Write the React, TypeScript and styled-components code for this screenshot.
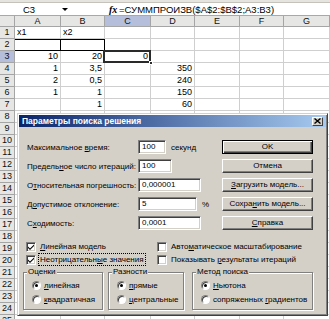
import React from "react";
import styled, { createGlobalStyle, css } from "styled-components";

const GlobalStyle = createGlobalStyle`
  html, body { margin: 0; padding: 0; background: #ffffff; }
  *, *::before, *::after { box-sizing: border-box; }
`;

const FONT = `"Liberation Sans", Arial, sans-serif`;

const Screen = styled.div`
  position: relative;
  width: 330px;
  height: 319px;
  overflow: hidden;
  background: #fff;
  font-family: ${FONT};
  font-size: 9px;
  color: #000;
`;

/* ---------- formula bar ---------- */
const Toolbar = styled.div`
  height: 3px;
  background: #e6e4de;
  border-bottom: 1px solid #c4c2bb;
`;

const FormulaBar = styled.div`
  display: flex;
  align-items: center;
  height: 13px;
  background: #fff;
  border-bottom: 1px solid #a9a8a2;
`;

const NameBox = styled.div`
  width: 58px;
  text-align: center;
  font-size: 9.5px;
`;

const DropArrow = styled.div`
  width: 14px;
  display: flex;
  justify-content: center;
  &::before {
    content: "";
    border-left: 3px solid transparent;
    border-right: 3px solid transparent;
    border-top: 3px solid #000;
  }
`;

const Spacer = styled.div<{ $w: number }>`
  width: ${(p) => p.$w}px;
`;

const Fx = styled.span`
  font-family: "Liberation Serif", "Times New Roman", serif;
  font-style: italic;
  font-weight: bold;
  font-size: 10px;
  width: 9px;
`;

const Formula = styled.span`
  margin-left: 1px;
  font-size: 9.5px;
  white-space: nowrap;
`;

/* ---------- sheet ---------- */
const Sheet = styled.div`
  display: grid;
  grid-template-columns: 15px 46px 44px 46px 44px 45px 44px 46px;
  grid-template-rows: 11px;
  grid-auto-rows: 12px;
`;

const headBase = css`
  background: #e6e6e4;
  border-right: 1px solid #a5a5a5;
  border-bottom: 1px solid #a5a5a5;
  text-align: center;
  line-height: 10px;
  font-size: 9px;
  color: #111;
`;

const Corner = styled.div`
  ${headBase}
`;

const ColHead = styled.div<{ $active?: boolean }>`
  ${headBase}
  background: ${(p) => (p.$active ? "#b5bfdc" : "#e6e6e4")};
`;

const RowHead = styled.div<{ $active?: boolean }>`
  ${headBase}
  line-height: 11px;
  background: ${(p) => (p.$active ? "#b5bfdc" : "#e6e6e4")};
`;

const Cell = styled.div<{ $align: "left" | "right"; $boxed?: boolean; $selected?: boolean }>`
  position: relative;
  border-right: 1px solid ${(p) => (p.$boxed ? "#000" : "#cfcfcf")};
  border-bottom: 1px solid ${(p) => (p.$boxed ? "#000" : "#cfcfcf")};
  ${(p) => p.$boxed && "box-shadow: inset 0 1px 0 #000;"}
  padding: 0 2px;
  line-height: 11px;
  font-size: 9px;
  text-align: ${(p) => p.$align};
  white-space: nowrap;
  ${(p) =>
    p.$selected &&
    css`
      &::after {
        content: "";
        position: absolute;
        inset: -1px -1px -1px -2px;
        border: 2px solid #2a2a2a;
      }
      &::before {
        content: "";
        position: absolute;
        right: -3px;
        bottom: -3px;
        width: 4px;
        height: 4px;
        background: #2a2a2a;
        border: 1px solid #fff;
        z-index: 1;
      }
    `}
`;

/* ---------- dialog ---------- */
const Dialog = styled.div`
  position: absolute;
  left: 17px;
  top: 113px;
  width: 311px;
  height: 203px;
  background: #d4d0c8;
  border: 1px solid;
  border-color: #d4d0c8 #404040 #404040 #d4d0c8;
  box-shadow: inset 1px 1px 0 #ffffff, inset -1px -1px 0 #808080;
  padding: 1px;
  display: flex;
  flex-direction: column;
  font-size: 8px;
`;

const TitleBar = styled.div`
  height: 12px;
  display: flex;
  align-items: center;
  justify-content: space-between;
  padding: 0 3px 0 3px;
  background: linear-gradient(to right, #0a246a, #a6caf0);
  color: #fff;
  font-weight: bold;
  font-size: 8.5px;
  white-space: nowrap;
`;

const CloseBtn = styled.div`
  width: 11px;
  height: 9px;
  background: #d4d0c8;
  border: 1px solid;
  border-color: #fff #404040 #404040 #fff;
  display: flex;
  align-items: center;
  justify-content: center;
`;

const Body = styled.div`
  flex: 1;
  display: flex;
  flex-direction: column;
`;

const TopSection = styled.div`
  display: flex;
  justify-content: space-between;
  padding: 13px 13px 0 8px;
`;

const Fields = styled.div`
  display: grid;
  grid-template-columns: 111px auto;
  grid-auto-rows: 14px;
  row-gap: 5px;
  align-items: center;
`;

const Label = styled.div`
  white-space: nowrap;
`;

const InputRow = styled.div`
  display: flex;
  align-items: center;
  gap: 5px;
`;

const Input = styled.div<{ $w: number }>`
  width: ${(p) => p.$w}px;
  height: 14px;
  background: #fff;
  border: 1px solid;
  border-color: #808080 #fff #fff #808080;
  box-shadow: inset 1px 1px 0 #404040, inset -1px -1px 0 #d4d0c8;
  padding: 0 3px;
  line-height: 12px;
  white-space: nowrap;
`;

const Buttons = styled.div`
  display: flex;
  flex-direction: column;
  gap: 5px;
  width: 91px;
`;

const Btn = styled.div<{ $default?: boolean }>`
  height: 14px;
  background: #d4d0c8;
  border: 1px solid;
  border-color: ${(p) => (p.$default ? "#000" : "#fff #404040 #404040 #fff")};
  box-shadow: ${(p) =>
    p.$default
      ? "inset 1px 1px 0 #fff, inset -1px -1px 0 #404040, inset -2px -2px 0 #808080"
      : "inset -1px -1px 0 #808080"};
  text-align: center;
  line-height: 12px;
  white-space: nowrap;
`;

const U = styled.span`
  text-decoration: underline;
`;

const Checks = styled.div`
  display: grid;
  grid-template-columns: 131px auto;
  grid-auto-rows: 13px;
  margin-top: 10px;
  padding-left: 7px;
`;

const CheckItem = styled.div`
  display: flex;
  align-items: center;
  gap: 3px;
  white-space: nowrap;
`;

const CheckBox = styled.span`
  width: 10px;
  height: 10px;
  flex: none;
  background: #fff;
  border: 1px solid;
  border-color: #808080 #fff #fff #808080;
  box-shadow: inset 1px 1px 0 #404040, inset -1px -1px 0 #d4d0c8;
  display: flex;
  align-items: center;
  justify-content: center;
`;

const CheckText = styled.span<{ $focus?: boolean }>`
  padding: 0 1px;
  line-height: 11px;
  outline: ${(p) => (p.$focus ? "1px dotted #000" : "none")};
`;

const Groups = styled.div`
  display: flex;
  padding-left: 4px;
  margin-top: 6px;
`;

const Group = styled.div<{ $w: number; $gap: number }>`
  position: relative;
  width: ${(p) => p.$w}px;
  height: 38px;
  margin-right: ${(p) => p.$gap}px;
  border: 1px solid #808080;
  box-shadow: 1px 1px 0 #fff, inset 1px 1px 0 #fff;
  padding: 6px 0 0 8px;
  display: flex;
  flex-direction: column;
  gap: 2px;
`;

const Legend = styled.span`
  position: absolute;
  top: -6px;
  left: 3px;
  padding: 0 1px;
  background: #d4d0c8;
  line-height: 10px;
  white-space: nowrap;
`;

const RadioItem = styled.div`
  display: flex;
  align-items: center;
  gap: 3px;
  height: 12px;
  white-space: nowrap;
`;

const Radio = styled.span<{ $on?: boolean }>`
  width: 9px;
  height: 9px;
  flex: none;
  border-radius: 50%;
  background: #fff;
  border: 1px solid;
  border-color: #808080 #fff #fff #808080;
  box-shadow: inset 1px 1px 0 #404040;
  display: flex;
  align-items: center;
  justify-content: center;
  &::after {
    content: "";
    width: 3px;
    height: 3px;
    border-radius: 50%;
    background: ${(p) => (p.$on ? "#000" : "transparent")};
  }
`;

/* ---------- data ---------- */
const cols = ["A", "B", "C", "D", "E", "F", "G"];
type CellData = { v?: string; align?: "left" | "right"; boxed?: boolean; selected?: boolean };
const data: Record<number, Record<string, CellData>> = {
  1: { A: { v: "x1", align: "left" }, B: { v: "x2", align: "left" } },
  2: { A: { boxed: true }, B: { boxed: true } },
  3: { A: { v: "10" }, B: { v: "20" }, C: { v: "0", selected: true } },
  4: { A: { v: "1" }, B: { v: "3,5" }, D: { v: "350" } },
  5: { A: { v: "2" }, B: { v: "0,5" }, D: { v: "240" } },
  6: { A: { v: "1" }, B: { v: "1" }, D: { v: "150" } },
  7: { B: { v: "1" }, D: { v: "60" } },
};
const rows = Array.from({ length: 25 }, (_, i) => i + 1);

const Tick = () => (
  <svg width="8" height="8" viewBox="0 0 8 8">
    <path d="M1 3.5 L3 5.5 L7 1.5 L7 3 L3 7 L1 5 Z" fill="#000" />
  </svg>
);

const XIcon = () => (
  <svg width="7" height="6" viewBox="0 0 7 6">
    <path d="M0.5 0.5 L6.5 5.5 M6.5 0.5 L0.5 5.5" stroke="#000" strokeWidth="1.4" />
  </svg>
);

export default function App() {
  return (
    <>
      <GlobalStyle />
      <Screen>
        <Toolbar />
        <FormulaBar>
          <NameBox>C3</NameBox>
          <DropArrow />
          <Spacer $w={37} />
          <Fx>fx</Fx>
          <Formula>=СУММПРОИЗВ($A$2:$B$2;A3:B3)</Formula>
        </FormulaBar>
        <Sheet>
          <Corner />
          {cols.map((c) => (
            <ColHead key={c} $active={c === "C"}>
              {c}
            </ColHead>
          ))}
          {rows.map((r) => (
            <React.Fragment key={r}>
              <RowHead $active={r === 3}>{r}</RowHead>
              {cols.map((c) => {
                const cell = data[r]?.[c];
                return (
                  <Cell
                    key={c}
                    $align={cell?.align ?? "right"}
                    $boxed={!!cell?.boxed}
                    $selected={!!cell?.selected}
                  >
                    {cell?.v}
                  </Cell>
                );
              })}
            </React.Fragment>
          ))}
        </Sheet>

        <Dialog>
          <TitleBar>
            <span>Параметры поиска решения</span>
            <CloseBtn>
              <XIcon />
            </CloseBtn>
          </TitleBar>
          <Body>
            <TopSection>
              <Fields>
                <Label>
                  Максимальное <U>в</U>ремя:
                </Label>
                <InputRow>
                  <Input $w={28}>100</Input>
                  <span>секунд</span>
                </InputRow>
                <Label>
                  Предель<U>н</U>ое число итераций:
                </Label>
                <InputRow>
                  <Input $w={34}>100</Input>
                </InputRow>
                <Label>
                  О<U>т</U>носительная погрешность:
                </Label>
                <InputRow>
                  <Input $w={63}>0,000001</Input>
                </InputRow>
                <Label>
                  Д<U>о</U>пустимое отклонение:
                </Label>
                <InputRow>
                  <Input $w={59}>5</Input>
                  <span>%</span>
                </InputRow>
                <Label>
                  С<U>х</U>одимость:
                </Label>
                <InputRow>
                  <Input $w={63}>0,0001</Input>
                </InputRow>
              </Fields>
              <Buttons>
                <Btn $default>OK</Btn>
                <Btn>Отмена</Btn>
                <Btn>
                  <U>З</U>агрузить модель...
                </Btn>
                <Btn>
                  Сохра<U>н</U>ить модель...
                </Btn>
                <Btn>
                  <U>С</U>правка
                </Btn>
              </Buttons>
            </TopSection>

            <Checks>
              <CheckItem>
                <CheckBox>
                  <Tick />
                </CheckBox>
                <CheckText>
                  <U>Л</U>инейная модель
                </CheckText>
              </CheckItem>
              <CheckItem>
                <CheckBox />
                <CheckText>
                  Авто<U>м</U>атическое масштабирование
                </CheckText>
              </CheckItem>
              <CheckItem>
                <CheckBox>
                  <Tick />
                </CheckBox>
                <CheckText $focus>
                  Неотрицательн<U>ы</U>е значения
                </CheckText>
              </CheckItem>
              <CheckItem>
                <CheckBox />
                <CheckText>
                  Показывать <U>р</U>езультаты итераций
                </CheckText>
              </CheckItem>
            </Checks>

            <Groups>
              <Group $w={80} $gap={5}>
                <Legend>Оценки</Legend>
                <RadioItem>
                  <Radio $on />
                  <span>
                    <U>л</U>инейная
                  </span>
                </RadioItem>
                <RadioItem>
                  <Radio />
                  <span>
                    <U>к</U>вадратичная
                  </span>
                </RadioItem>
              </Group>
              <Group $w={76} $gap={8}>
                <Legend>Разности</Legend>
                <RadioItem>
                  <Radio $on />
                  <span>
                    <U>п</U>рямые
                  </span>
                </RadioItem>
                <RadioItem>
                  <Radio />
                  <span>
                    <U>ц</U>ентральные
                  </span>
                </RadioItem>
              </Group>
              <Group $w={121} $gap={0}>
                <Legend>Метод поиска</Legend>
                <RadioItem>
                  <Radio $on />
                  <span>
                    <U>Н</U>ьютона
                  </span>
                </RadioItem>
                <RadioItem>
                  <Radio />
                  <span>
                    сопряженных <U>г</U>радиентов
                  </span>
                </RadioItem>
              </Group>
            </Groups>
          </Body>
        </Dialog>
      </Screen>
    </>
  );
}
